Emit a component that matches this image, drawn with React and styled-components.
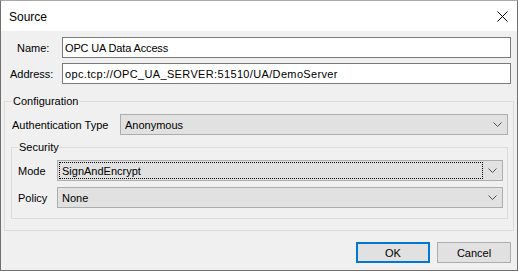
import React from "react";
import styled, { createGlobalStyle } from "styled-components";

const Global = createGlobalStyle`
  html, body { margin: 0; padding: 0; background: #ffffff; }
  * { box-sizing: border-box; }
`;

const Window = styled.div`
  width: 518px;
  height: 271px;
  display: flex;
  flex-direction: column;
  background: #f0f0f0;
  border: 1px solid #707070;
  border-top-color: #a8a8a8;
  font-family: "Liberation Sans", Arial, sans-serif;
  font-size: 11px;
  color: #000;
`;

const TitleBar = styled.div`
  height: 30px;
  flex: none;
  background: #ffffff;
  display: flex;
  align-items: center;
  padding-left: 8px;
  padding-right: 9px;
  font-size: 12px;
`;

const Title = styled.div`
  flex: 1;
  padding-top: 1px;
`;

const CloseIcon = styled.svg`
  width: 11px;
  height: 11px;
  display: block;
`;

const Body = styled.div`
  flex: 1;
  display: flex;
  flex-direction: column;
  padding: 6px 3px 0 3px;
`;

const FieldRow = styled.div`
  display: flex;
  align-items: center;
  height: 21px;
  margin-top: ${(p) => p.$top || 0}px;
  padding-right: 3px;
`;

const FieldLabel = styled.label`
  margin-left: ${(p) => p.$indent}px;
`;

const TextBox = styled.div`
  margin-left: auto;
  width: 449px;
  height: 21px;
  background: #ffffff;
  border: 1px solid #7a7a7a;
  padding-left: 2px;
  display: flex;
  align-items: center;
  white-space: nowrap;
  letter-spacing: ${(p) => p.$tracking || 0}px;
`;

const Group = styled.fieldset`
  margin: ${(p) => p.$top}px 0 0 ${(p) => p.$left || 0}px;
  width: ${(p) => p.$width}px;
  min-width: 0;
  border: 1px solid #dcdcdc;
  padding: ${(p) => p.$pad};
  display: flex;
  flex-direction: column;
`;

const Legend = styled.legend`
  padding: 0 1px;
  line-height: 13px;
  font-size: 11px;
`;

const ComboRow = styled.div`
  display: flex;
  align-items: center;
  height: 21px;
  margin-top: ${(p) => p.$top || 0}px;
`;

const Combo = styled.div`
  margin-left: auto;
  width: ${(p) => p.$width}px;
  height: 21px;
  background: #e1e1e1;
  border: 1px solid #adadad;
  display: flex;
  align-items: center;
  padding: 1px 0 1px 1px;
`;

const ComboValue = styled.div`
  flex: 1;
  height: 17px;
  display: flex;
  align-items: center;
  padding-left: 2px;
  border: 1px dotted ${(p) => (p.$focused ? "#000" : "transparent")};
  white-space: nowrap;
`;

const Arrow = styled.div`
  width: 19px;
  flex: none;
  display: flex;
  align-items: center;
  justify-content: center;
`;

const ButtonBar = styled.div`
  display: flex;
  justify-content: flex-end;
  gap: 7px;
  margin-top: 11px;
  padding-right: 3px;
`;

const Button = styled.div`
  width: 74px;
  height: 21px;
  background: #e1e1e1;
  border: ${(p) => (p.$default ? "2px solid #0078d7" : "1px solid #adadad")};
  display: flex;
  align-items: center;
  justify-content: center;
  padding-top: 1px;
`;

const Chevron = () => (
  <svg width="9" height="5" viewBox="0 0 9 5">
    <path d="M0.5 0.5 L4.5 4.5 L8.5 0.5" fill="none" stroke="#505050" strokeWidth="1" />
  </svg>
);

const ComboBox = ({ width, value, focused }) => (
  <Combo $width={width}>
    <ComboValue $focused={focused}>{value}</ComboValue>
    <Arrow>
      <Chevron />
    </Arrow>
  </Combo>
);

export default function App() {
  return (
    <>
      <Global />
      <Window>
        <TitleBar>
          <Title>Source</Title>
          <CloseIcon viewBox="0 0 11 11">
            <path d="M0.5 0.5 L10.5 10.5 M10.5 0.5 L0.5 10.5" stroke="#000" strokeWidth="1" />
          </CloseIcon>
        </TitleBar>
        <Body>
          <FieldRow>
            <FieldLabel $indent={13}>Name:</FieldLabel>
            <TextBox $tracking={-0.15}>OPC UA Data Access</TextBox>
          </FieldRow>
          <FieldRow $top={5}>
            <FieldLabel $indent={6}>Address:</FieldLabel>
            <TextBox $tracking={0.35}>opc.tcp://OPC_UA_SERVER:51510/UA/DemoServer</TextBox>
          </FieldRow>
          <Group $top={11} $width={510} $pad="6px 5px 11px 7px">
            <Legend>Configuration</Legend>
            <ComboRow>
              <span>Authentication Type</span>
              <ComboBox width={388} value="Anonymous" />
            </ComboRow>
            <Group $top={6} $left={-1} $width={497} $pad="6px 4px 10px 6px">
              <Legend>Security</Legend>
              <ComboRow>
                <span>Mode</span>
                <ComboBox width={446} value="SignAndEncrypt" focused />
              </ComboRow>
              <ComboRow $top={6}>
                <span>Policy</span>
                <ComboBox width={446} value="None" />
              </ComboRow>
            </Group>
          </Group>
          <ButtonBar>
            <Button $default>OK</Button>
            <Button>Cancel</Button>
          </ButtonBar>
        </Body>
      </Window>
    </>
  );
}
